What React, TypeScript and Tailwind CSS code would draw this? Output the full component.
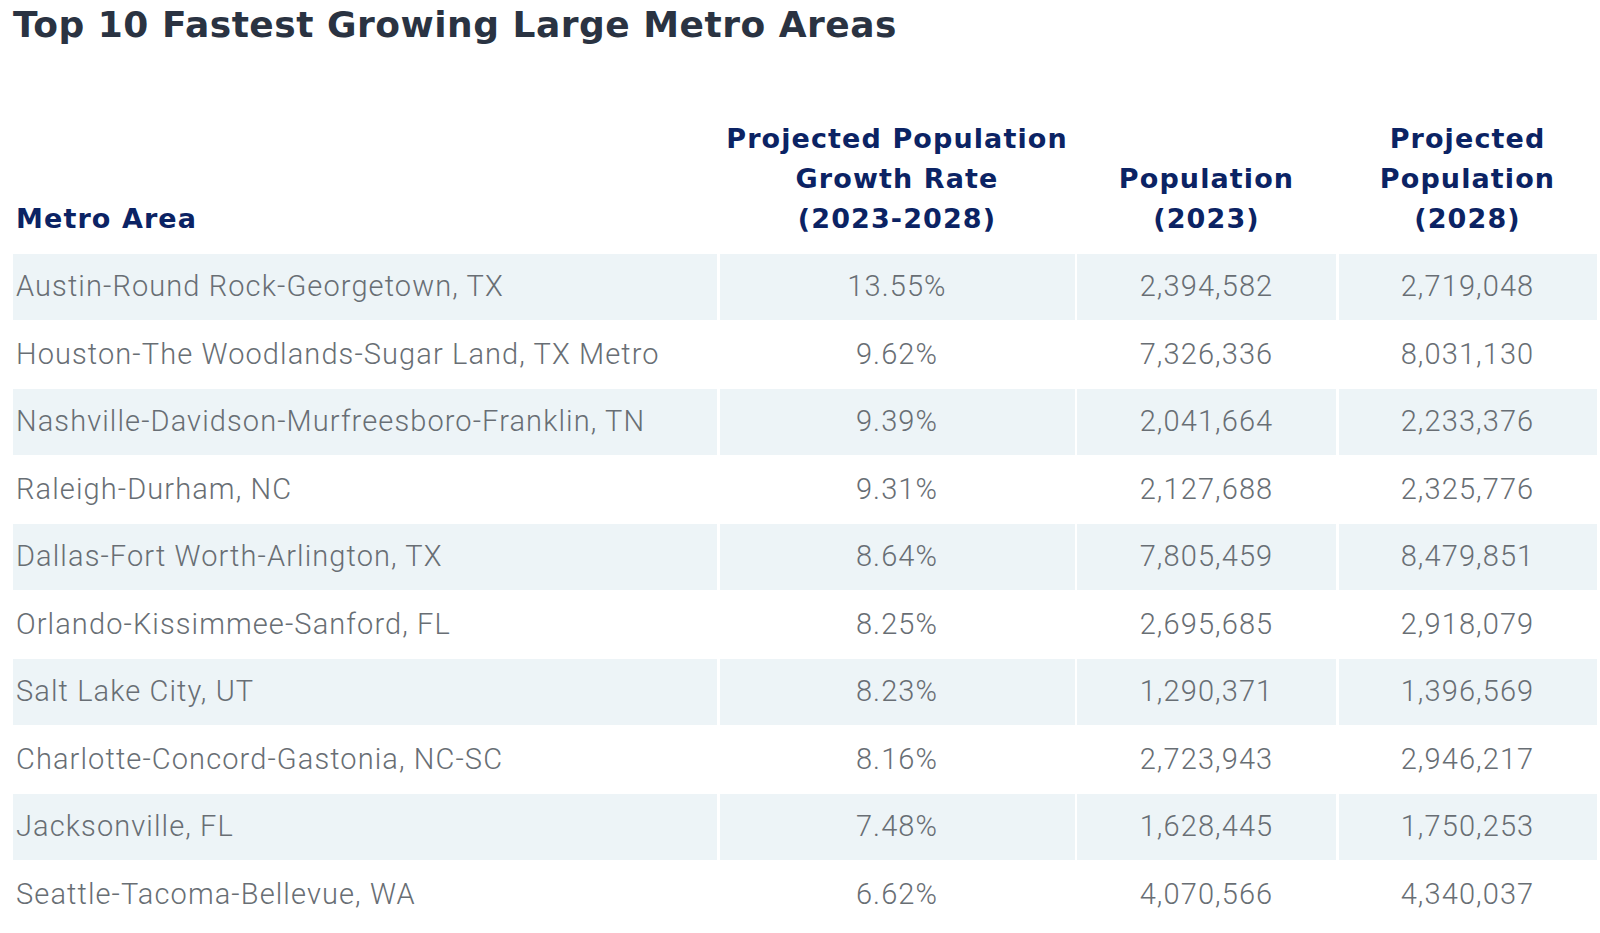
const ROWS = [
  ["Austin-Round Rock-Georgetown, TX", "13.55%", "2,394,582", "2,719,048"],
  ["Houston-The Woodlands-Sugar Land, TX Metro", "9.62%", "7,326,336", "8,031,130"],
  ["Nashville-Davidson-Murfreesboro-Franklin, TN", "9.39%", "2,041,664", "2,233,376"],
  ["Raleigh-Durham, NC", "9.31%", "2,127,688", "2,325,776"],
  ["Dallas-Fort Worth-Arlington, TX", "8.64%", "7,805,459", "8,479,851"],
  ["Orlando-Kissimmee-Sanford, FL", "8.25%", "2,695,685", "2,918,079"],
  ["Salt Lake City, UT", "8.23%", "1,290,371", "1,396,569"],
  ["Charlotte-Concord-Gastonia, NC-SC", "8.16%", "2,723,943", "2,946,217"],
  ["Jacksonville, FL", "7.48%", "1,628,445", "1,750,253"],
  ["Seattle-Tacoma-Bellevue, WA", "6.62%", "4,070,566", "4,340,037"],
];

const HEAD = [
  ["Metro Area"],
  ["Projected Population", "Growth Rate", "(2023-2028)"],
  ["Population", "(2023)"],
  ["Projected", "Population", "(2028)"],
];

const headFont = { fontFamily: "'DejaVu Sans', Inter, sans-serif" };

export default function App() {
  return (
    <div className="min-h-[933px] bg-white pl-[13px] pr-[3px]">
      <h1
        className="pt-[2px] text-[36px] font-bold leading-[46px] tracking-[0.5px] text-[#2a3342]"
        style={headFont}
      >
        Top 10 Fastest Growing Large Metro Areas
      </h1>
      <div className="mt-[71px] grid grid-cols-[704px_355px_259px_258px] gap-x-[2.5px] gap-y-[2px]">
        {HEAD.map((lines, i) => (
          <div
            key={i}
            className={`flex flex-col justify-end pb-[13px] text-[27px] font-bold leading-[40px] tracking-[1.1px] text-[#0b2364] ${
              i === 0 ? "items-start pl-[3px]" : "items-center text-center"
            }`}
            style={headFont}
          >
            {lines.map((l) => (
              <span key={l} className="whitespace-nowrap">
                {l}
              </span>
            ))}
          </div>
        ))}
        {ROWS.map((r, ri) =>
          r.map((c, ci) => (
            <div
              key={ri + "-" + ci}
              className={`flex h-[65.5px] items-center text-[29px] font-light tracking-[1.1px] text-[#686e74] ${
                ri % 2 === 0 ? "bg-[#edf4f7]" : "bg-white"
              } ${ci === 0 ? "pl-[3px]" : "justify-center"}`}
              style={{ fontFamily: "Roboto, 'Liberation Sans', sans-serif" }}
            >
              {c}
            </div>
          ))
        )}
      </div>
    </div>
  );
}
